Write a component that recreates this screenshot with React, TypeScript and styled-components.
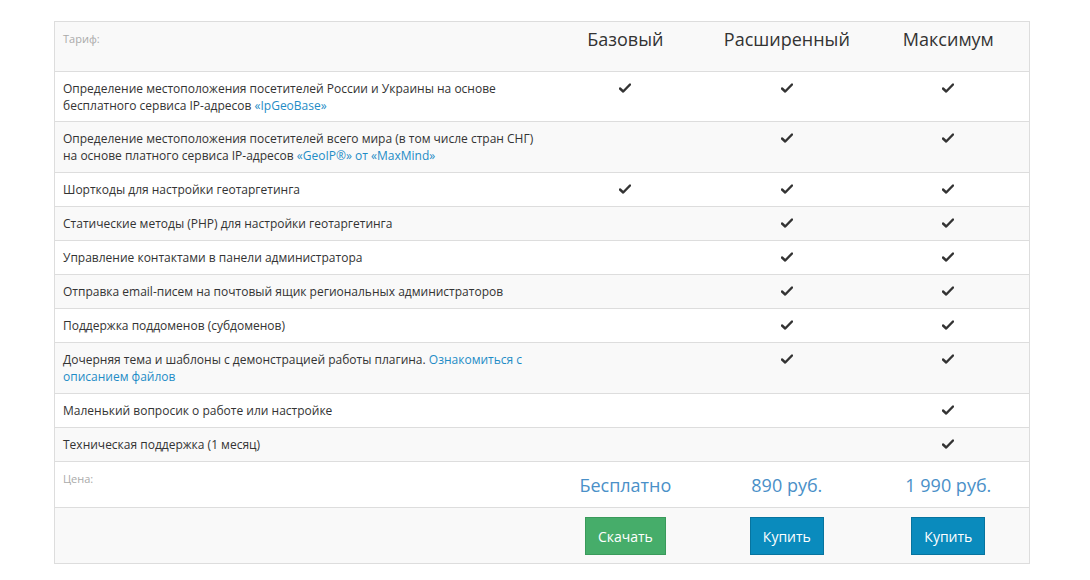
import React from "react";
import styled, { createGlobalStyle } from "styled-components";

const Global = createGlobalStyle`
  body { margin: 0; background: #fff; font-family: "Open Sans", sans-serif; }
`;

const Wrap = styled.div`padding: 21px 0 0 54px;`;
const Table = styled.table`
  width: 976px; border-collapse: collapse; border: 1px solid #ddd;
  font-size: 12px; color: #333;
`;
const Row = styled.tr<{ $alt?: boolean }>`
  background: ${p => (p.$alt ? "#f9f9f9" : "#fff")};
  border-top: 1px solid #ddd;
`;
const Feat = styled.td<{ $h: number }>`
  width: 494px; padding: 0 8px; height: ${p => p.$h}px; line-height: 17px; vertical-align: top;
  padding-top: 8px; box-sizing: border-box;
`;
const Label = styled.td`
  color: #aaa; font-size: 11px; vertical-align: top; padding: 9px 8px; box-sizing: border-box;
`;
const Cell = styled.td`
  width: 160px; text-align: center; vertical-align: top; padding-top: 8px;
`;
const Head = styled.th`
  width: 160px; font-size: 18px; font-weight: 400; color: #333; padding-top: 5px; vertical-align: top;
  text-align: center;
`;
const Price = styled.td`
  width: 160px; text-align: center; color: #4a90c8; font-size: 18px; vertical-align: top; padding-top: 11px;
`;
const BtnCell = styled.td`text-align: center; vertical-align: top; padding-top: 9px;`;
const Btn = styled.button<{ $green?: boolean }>`
  font-family: "Open Sans", sans-serif; font-size: 14px; color: #fff; height: 38px; padding: 0 12px;
  background: ${p => (p.$green ? "#46ad6a" : "#0a8bbd")};
  border: 1px solid ${p => (p.$green ? "#3a9a5b" : "#07749f")}; cursor: pointer;
`;
const A = styled.span`color: #1e8cc6;`;

const Check = () => (
  <svg width="12" height="10" viewBox="0 0 12 10">
    <path d="M1 5.5 L4.2 8.5 L11 1.5" stroke="#333" strokeWidth="2.4" fill="none" strokeLinecap="round" strokeLinejoin="round" />
  </svg>
);

const rows: [React.ReactNode, number, boolean[]][] = [
  [<>Определение местоположения посетителей России и Украины на основе<br />бесплатного сервиса IP-адресов <A>«IpGeoBase»</A></>, 50, [true, true, true]],
  [<>Определение местоположения посетителей всего мира (в том числе стран СНГ)<br />на основе платного сервиса IP-адресов <A>«GeoIP®» от «MaxMind»</A></>, 51, [false, true, true]],
  ["Шорткоды для настройки геотаргетинга", 34, [true, true, true]],
  ["Статические методы (PHP) для настройки геотаргетинга", 34, [false, true, true]],
  ["Управление контактами в панели администратора", 34, [false, true, true]],
  ["Отправка email-писем на почтовый ящик региональных администраторов", 34, [false, true, true]],
  ["Поддержка поддоменов (субдоменов)", 34, [false, true, true]],
  [<>Дочерняя тема и шаблоны с демонстрацией работы плагина. <A>Ознакомиться с<br />описанием файлов</A></>, 51, [false, true, true]],
  ["Маленький вопросик о работе или настройке", 34, [false, false, true]],
  ["Техническая поддержка (1 месяц)", 34, [false, false, true]],
];

export default function App() {
  return (
    <Wrap>
      <Global />
      <Table>
        <tbody>
          <Row $alt style={{ height: 50 }}>
            <Label>Тариф:</Label>
            <Head>Базовый</Head>
            <Head>Расширенный</Head>
            <Head>Максимум</Head>
          </Row>
          {rows.map(([t, h, c], i) => (
            <Row key={i} $alt={i % 2 === 1}>
              <Feat $h={h}>{t}</Feat>
              {c.map((v, j) => <Cell key={j}>{v && <Check />}</Cell>)}
            </Row>
          ))}
          <Row style={{ height: 46 }}>
            <Label>Цена:</Label>
            <Price>Бесплатно</Price>
            <Price>890 руб.</Price>
            <Price>1 990 руб.</Price>
          </Row>
          <Row $alt style={{ height: 56 }}>
            <td />
            <BtnCell><Btn $green>Скачать</Btn></BtnCell>
            <BtnCell><Btn>Купить</Btn></BtnCell>
            <BtnCell><Btn>Купить</Btn></BtnCell>
          </Row>
        </tbody>
      </Table>
    </Wrap>
  );
}
